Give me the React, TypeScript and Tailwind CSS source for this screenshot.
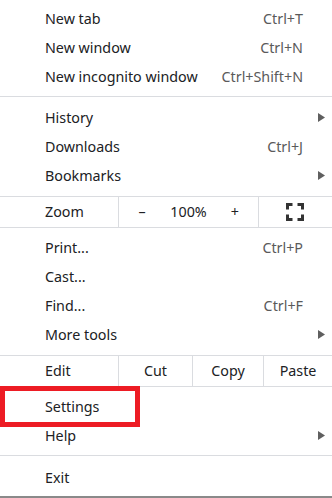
import type { ReactNode } from "react";

const Arrow = () => (
  <svg width="7" height="9" viewBox="0 0 7 9" className="block">
    <path d="M0 0 L7 4.5 L0 9 Z" fill="#5f5f5f" />
  </svg>
);

const Sep = () => <div className="h-px bg-[#dadce0]" />;

const Item = ({ label, shortcut, sub }: { label: string; shortcut?: string; sub?: boolean }) => (
  <div className="flex h-[29px] items-center pl-[45px]">
    <span className="flex-1">{label}</span>
    {shortcut && <span className="text-[#5a5a5a]">{shortcut}</span>}
    <span className="flex w-[29px] pl-[15px]">{sub && <Arrow />}</span>
  </div>
);

const Section = ({ children, className }: { children: ReactNode; className: string }) => (
  <div className={className}>{children}</div>
);

const Divider = () => <div className="w-px self-stretch bg-[#dadce0]" />;

const FullscreenIcon = () => (
  <svg width="18" height="18" viewBox="0 0 18 18" className="block">
    <path
      d="M1.5 6.5V1.5h5 M11.5 1.5h5v5 M16.5 11.5v5h-5 M6.5 16.5h-5v-5"
      fill="none"
      stroke="#333"
      strokeWidth="3"
    />
  </svg>
);

export default function App() {
  return (
    <div
      className="relative h-[498px] w-[332px] overflow-hidden border-b-2 border-[#8a8a8a] bg-white text-[14.3px] text-[#202124]"
      style={{ fontFamily: '"Noto Sans", "Open Sans", sans-serif' }}
    >
      <Section className="pt-[4px] pb-[5px]">
        <Item label="New tab" shortcut="Ctrl+T" />
        <Item label="New window" shortcut="Ctrl+N" />
        <Item label="New incognito window" shortcut="Ctrl+Shift+N" />
      </Section>
      <Sep />
      <Section className="pt-[6px] pb-[6px]">
        <Item label="History" sub />
        <Item label="Downloads" shortcut="Ctrl+J" />
        <Item label="Bookmarks" sub />
      </Section>
      <Sep />
      <div className="flex h-[30px] items-center">
        <span className="w-[118px] pl-[45px]">Zoom</span>
        <Divider />
        <div className="grid w-[139px] grid-cols-3 text-center">
          <span>–</span>
          <span>100%</span>
          <span>+</span>
        </div>
        <Divider />
        <div className="flex flex-1 justify-center pr-[2px]">
          <FullscreenIcon />
        </div>
      </div>
      <Sep />
      <Section className="pt-[5px] pb-[6px]">
        <Item label="Print..." shortcut="Ctrl+P" />
        <Item label="Cast..." />
        <Item label="Find..." shortcut="Ctrl+F" />
        <Item label="More tools" sub />
      </Section>
      <Sep />
      <div className="flex h-[30px] items-center">
        <span className="w-[118px] pl-[45px]">Edit</span>
        <Divider />
        <span className="w-[73px] text-center">Cut</span>
        <Divider />
        <span className="w-[70px] text-center">Copy</span>
        <Divider />
        <span className="flex-1 text-center">Paste</span>
      </div>
      <Sep />
      <Section className="pt-[5px] pb-[5px]">
        <Item label="Settings" />
        <Item label="Help" sub />
      </Section>
      <Sep />
      <Section className="pt-[7px]">
        <Item label="Exit" />
      </Section>
      <div className="absolute left-0 top-[386px] h-[41px] w-[140px] border-[5px] border-[#ed1c24]" />
    </div>
  );
}
